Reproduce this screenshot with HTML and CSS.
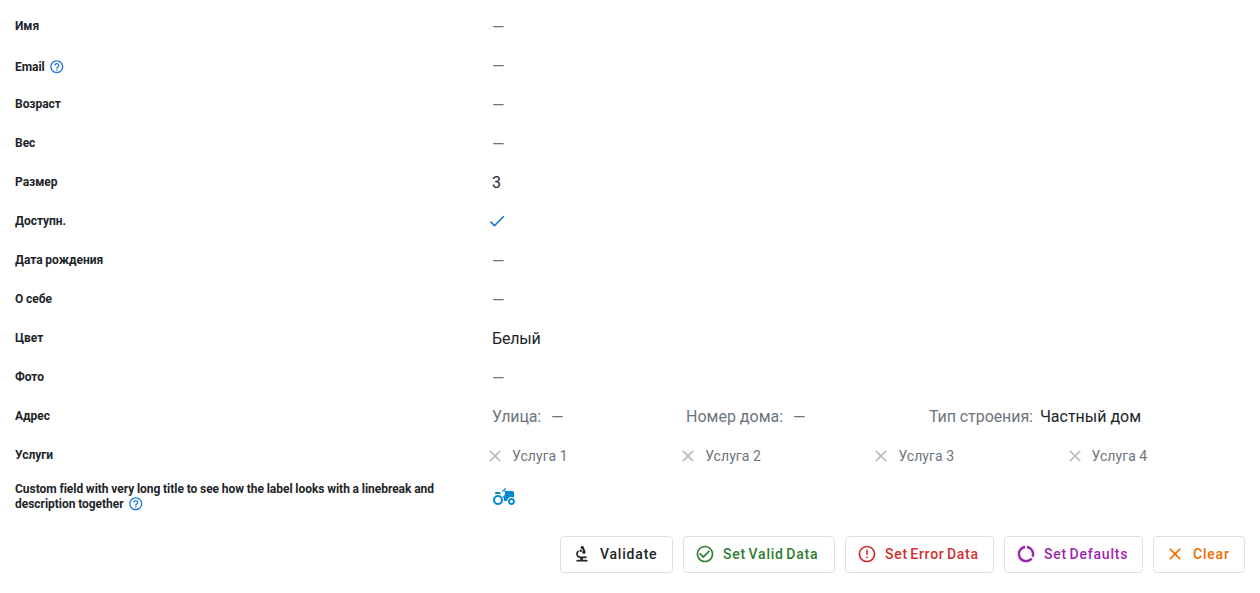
FILE: index.html
```html
<!DOCTYPE html>
<html lang="ru">
<head>
<meta charset="utf-8">
<title>Form</title>
<link rel="stylesheet" href="styles.css">
</head>
<body>
<svg class="sprite" aria-hidden="true">
  <symbol id="help" viewBox="0 0 24 24"><path d="M11 18h2v-2h-2v2zm1-16C6.48 2 2 6.48 2 12s4.48 10 10 10 10-4.48 10-10S17.52 2 12 2zm0 18c-4.41 0-8-3.59-8-8s3.59-8 8-8 8 3.59 8 8-3.59 8-8 8zm0-14c-2.21 0-4 1.79-4 4h2c0-1.1.9-2 2-2s2 .9 2 2c0 2-3 1.75-3 5h2c0-2.25 3-2.5 3-5 0-2.21-1.79-4-4-4z"/></symbol>
  <symbol id="check" viewBox="0 0 24 24"><path d="M9 16.17 4.83 12l-1.42 1.41L9 19 21 7l-1.41-1.41z"/></symbol>
  <symbol id="close" viewBox="0 0 24 24"><path d="M19 6.41 17.59 5 12 10.59 6.41 5 5 6.41 10.59 12 5 17.59 6.41 19 12 13.41 17.59 19 19 17.59 13.41 12z"/></symbol>
  <symbol id="tractor" viewBox="0 0 24 24"><path d="M19.5 12c.93 0 1.78.28 2.5.76V8c0-1.1-.9-2-2-2h-6.29l-1.06-1.06 1.41-1.41-.71-.71-3.53 3.53.71.71 1.41-1.41L13 6.71V9c0 1.1-.9 2-2 2h-.54c.95 1.06 1.54 2.46 1.54 4 0 .34-.04.67-.09 1h3.14c.25-2.25 2.14-4 4.45-4z"/><path d="M19.5 13c-1.93 0-3.5 1.57-3.5 3.5s1.57 3.5 3.5 3.5 3.5-1.57 3.5-3.5-1.57-3.5-3.5-3.5zm0 5c-.83 0-1.5-.67-1.5-1.5s.67-1.5 1.5-1.5 1.5.67 1.5 1.5-.67 1.5-1.5 1.5zM4 9h5c0-1.1-.9-2-2-2H4c-.55 0-1 .45-1 1s.45 1 1 1z"/><circle cx="6" cy="15" r="3.9" fill="none" stroke="currentColor" stroke-width="1.8"/><circle cx="6" cy="15" r="4.8" fill="none" stroke="currentColor" stroke-width=".6" stroke-dasharray="3.2 .57"/></symbol>
  <symbol id="biotech" viewBox="0 0 24 24"><path d="M7 19c-1.1 0-2 .9-2 2h14c0-1.1-.9-2-2-2h-4v-2h3c1.1 0 2-.9 2-2h-8c-1.66 0-3-1.34-3-3 0-1.09.59-2.04 1.46-2.56C8.17 9.03 8 8.54 8 8c0-.21.04-.42.09-.62C6.28 8.13 5 9.92 5 12c0 2.76 2.24 5 5 5v2H7z"/><path d="M10.56 5.51C11.91 5.54 13 6.64 13 8c0 .75-.33 1.41-.85 1.87l.59 1.62.94-.34.34.94 1.88-.68-.34-.94.94-.34-2.74-7.52-.94.34-.34-.94-1.88.68.34.94-.94.35.56 1.53z"/><circle cx="10.5" cy="8" r="1.5"/></symbol>
  <symbol id="ok" viewBox="0 0 24 24"><path d="M16.59 7.58 10 14.17l-3.59-3.58L5 12l5 5 8-8zM12 2C6.48 2 2 6.48 2 12s4.48 10 10 10 10-4.48 10-10S17.52 2 12 2zm0 18c-4.42 0-8-3.58-8-8s3.58-8 8-8 8 3.58 8 8-3.58 8-8 8z"/></symbol>
  <symbol id="error" viewBox="0 0 24 24"><path d="M11 15h2v2h-2zm0-8h2v6h-2zm.99-5C6.47 2 2 6.48 2 12s4.47 10 9.99 10C17.52 22 22 17.52 22 12S17.52 2 11.99 2zM12 20c-4.42 0-8-3.58-8-8s3.58-8 8-8 8 3.58 8 8-3.58 8-8 8z"/></symbol>
  <symbol id="usage" viewBox="0 0 24 24"><path d="M13 2.05v3.03c3.39.49 6 3.39 6 6.92 0 .9-.18 1.75-.48 2.54l2.6 1.53c.56-1.24.88-2.62.88-4.07 0-5.18-3.95-9.45-9-9.95zM12 19c-3.87 0-7-3.13-7-7 0-3.53 2.61-6.43 6-6.92V2.05c-5.06.5-9 4.76-9 9.95 0 5.52 4.47 10 9.99 10 3.31 0 6.24-1.61 8.06-4.09l-2.6-1.53C16.17 17.98 14.21 19 12 19z"/></symbol>
</svg>
<main class="form">
  <div class="row"><div class="label">Имя</div><div class="value empty">—</div></div>
  <div class="row"><div class="label label-help">Email<svg class="help"><use href="#help"/></svg></div><div class="value empty">—</div></div>
  <div class="row"><div class="label">Возраст</div><div class="value empty">—</div></div>
  <div class="row"><div class="label">Вес</div><div class="value empty">—</div></div>
  <div class="row"><div class="label">Размер</div><div class="value">3</div></div>
  <div class="row"><div class="label">Доступн.</div><div class="value hang"><svg class="icon blue"><use href="#check"/></svg></div></div>
  <div class="row"><div class="label">Дата рождения</div><div class="value empty">—</div></div>
  <div class="row"><div class="label">О себе</div><div class="value empty">—</div></div>
  <div class="row"><div class="label">Цвет</div><div class="value tight">Белый</div></div>
  <div class="row"><div class="label">Фото</div><div class="value empty plain">—</div></div>
  <div class="row"><div class="label">Адрес</div>
    <div class="value address">
      <div class="part"><span class="muted tight">Улица:</span><span class="dash">—</span></div>
      <div class="part"><span class="muted">Номер дома:</span><span class="dash">—</span></div>
      <div class="part"><span class="muted build">Тип строения:</span><span class="text">Частный дом</span></div>
    </div>
  </div>
  <div class="row"><div class="label">Услуги</div>
    <div class="value services">
      <div class="service"><svg class="icon"><use href="#close"/></svg><span>Услуга 1</span></div>
      <div class="service"><svg class="icon"><use href="#close"/></svg><span>Услуга 2</span></div>
      <div class="service"><svg class="icon"><use href="#close"/></svg><span>Услуга 3</span></div>
      <div class="service"><svg class="icon"><use href="#close"/></svg><span>Услуга 4</span></div>
    </div>
  </div>
  <div class="row row-custom"><div class="label">Custom field with very long title to see how the label looks with a linebreak and description together<svg class="help"><use href="#help"/></svg></div><div class="value"><svg class="tractor"><use href="#tractor"/></svg></div></div>
  <div class="actions">
    <button class="btn validate"><svg class="icon"><use href="#biotech"/></svg><span>Validate</span></button>
    <button class="btn valid"><svg class="icon"><use href="#ok"/></svg><span>Set Valid Data</span></button>
    <button class="btn invalid"><svg class="icon"><use href="#error"/></svg><span>Set Error Data</span></button>
    <button class="btn defaults"><svg class="icon"><use href="#usage"/></svg><span>Set Defaults</span></button>
    <button class="btn clear"><svg class="icon"><use href="#close"/></svg><span>Clear</span></button>
  </div>
</main>
</body>
</html>
```
FILE: styles.css
```css
* { box-sizing: border-box; }
body { margin: 0; background: #fff; color: #212529; font: 16px/24px Roboto, sans-serif; }
svg { fill: currentColor; flex: none; }
.sprite { display: none; }
.form { padding: 7px 15px 0; }
.row { display: grid; grid-template-columns: 477px 1fr; align-items: center; height: 39px; }
.label { padding-right: 45px; font-size: 12px; line-height: 15px; font-weight: 700; letter-spacing: -.03px; word-spacing: -.2px; }
.label-help { padding-top: 3px; }
.help { width: 15.6px; height: 15.6px; margin: -2px 0 -2px 4.1px; color: #1976d2; vertical-align: -2.4px; }
.row-custom .help { vertical-align: -1.9px; }
.value { display: flex; align-items: center; height: 24px; }
.empty { padding-top: 2px; color: #6c757d; }
.plain { color: #757575; }
.hang { margin-left: -5px; padding-bottom: 2px; }
.icon { width: 20px; height: 20px; }
.blue { color: #1976d2; }
.tight { letter-spacing: -.2px; }
.address { display: grid; grid-template-columns: 194px 243px 1fr; }
.part { display: flex; height: 24px; }
.muted { color: #6c757d; }
.build { letter-spacing: -.08px; }
.dash { margin-left: 10px; padding-top: 1px; color: #6c757d; }
.text { margin-left: 7px; }
.services { display: grid; grid-template-columns: repeat(4, 193.2px); margin-left: -7px; font-size: 14px; }
.service { display: flex; align-items: center; gap: 7px; height: 24px; color: #6c757d; letter-spacing: .06px; }
.service .icon { color: #bdbdbd; }
.row-custom { height: 44px; }
.tractor { width: 24px; height: 24px; color: #0288d1; }
.actions { display: flex; justify-content: flex-end; gap: 10px; padding-top: 17px; }
.btn { display: flex; align-items: center; justify-content: flex-start; gap: 8px; height: 37px; padding: 0 0 1px 11px; background: #fff; border: 1px solid #e0e0e0; border-radius: 4px; font: 500 14px/20px Roboto, sans-serif; letter-spacing: .8px; word-spacing: -1.8px; white-space: nowrap; }
.validate { width: 113px; color: #212529; }
.valid { width: 152px; color: #2e7d32; }
.invalid { width: 149px; color: #d32f2f; letter-spacing: .74px; }
.defaults { width: 139px; color: #9c27b0; }
.clear { width: 92px; color: #ef6c00; }
```
